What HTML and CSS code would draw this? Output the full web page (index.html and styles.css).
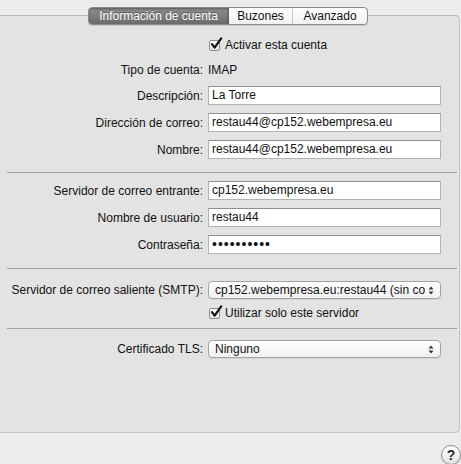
FILE: index.html
```html
<!DOCTYPE html>
<html lang="es">
<head>
<meta charset="utf-8">
<title>Información de cuenta</title>
<link rel="stylesheet" href="styles.css">
</head>
<body>
<div class="window">
  <div class="tabs">
    <div class="tab tab-active tab-info">Información de cuenta</div>
    <div class="tab tab-buzones">Buzones</div>
    <div class="tab tab-avanzado">Avanzado</div>
  </div>
  <div class="panel">
    <div class="row row-check row-first">
      <span class="label"></span>
      <div class="check">
        <span class="box"><svg class="tick" viewBox="0 0 14 14" width="14" height="14"><path d="M3 7.2 L5.6 10.6 L12.2 1.4" fill="none" stroke="#111" stroke-width="2.2" stroke-linecap="round" stroke-linejoin="round"/></svg></span>
        <span class="check-text">Activar esta cuenta</span>
      </div>
    </div>
    <div class="row row-static">
      <span class="label">Tipo de cuenta:</span>
      <span class="value">IMAP</span>
    </div>
    <div class="row row-field">
      <span class="label">Descripción:</span>
      <div class="field">La Torre</div>
    </div>
    <div class="row row-field">
      <span class="label">Dirección de correo:</span>
      <div class="field">restau44@cp152.webempresa.eu</div>
    </div>
    <div class="row row-field">
      <span class="label">Nombre:</span>
      <div class="field">restau44@cp152.webempresa.eu</div>
    </div>
    <div class="sep sep-1"></div>
    <div class="row row-field">
      <span class="label">Servidor de correo entrante:</span>
      <div class="field">cp152.webempresa.eu</div>
    </div>
    <div class="row row-field">
      <span class="label">Nombre de usuario:</span>
      <div class="field">restau44</div>
    </div>
    <div class="row row-field">
      <span class="label">Contraseña:</span>
      <div class="field"><span class="dots">••••••••••</span></div>
    </div>
    <div class="sep sep-2"></div>
    <div class="row row-popup row-smtp">
      <span class="label">Servidor de correo saliente (SMTP):</span>
      <div class="popup">
        <span class="popup-text">cp152.webempresa.eu:restau44 (sin co</span>
        <svg class="arrows" viewBox="0 0 6 9" width="6" height="9"><path d="M3 0.5 L5.5 3.5 L0.5 3.5 Z M3 8.5 L5.5 5.5 L0.5 5.5 Z" fill="#333"/></svg>
      </div>
    </div>
    <div class="row row-check2">
      <span class="label"></span>
      <div class="check">
        <span class="box"><svg class="tick" viewBox="0 0 14 14" width="14" height="14"><path d="M3 7.2 L5.6 10.6 L12.2 1.4" fill="none" stroke="#111" stroke-width="2.2" stroke-linecap="round" stroke-linejoin="round"/></svg></span>
        <span class="check-text">Utilizar solo este servidor</span>
      </div>
    </div>
    <div class="sep sep-3"></div>
    <div class="row row-popup row-tls">
      <span class="label">Certificado TLS:</span>
      <div class="popup">
        <span class="popup-text">Ninguno</span>
        <svg class="arrows" viewBox="0 0 6 9" width="6" height="9"><path d="M3 0.5 L5.5 3.5 L0.5 3.5 Z M3 8.5 L5.5 5.5 L0.5 5.5 Z" fill="#333"/></svg>
      </div>
    </div>
  </div>
  <div class="footer">
    <div class="help">?</div>
  </div>
</div>
</body>
</html>
```

FILE: styles.css
```css
html, body {
  margin: 0;
  padding: 0;
}
body {
  background: #ececec;
  font-family: "Liberation Sans", Arial, sans-serif;
  font-size: 12px;
  color: #111;
  width: 461px;
  height: 464px;
  overflow: hidden;
}
.window {
  display: flex;
  flex-direction: column;
}
.tabs {
  position: relative;
  z-index: 1;
  display: flex;
  margin: 7px 0 -10px 88px;
  width: 280px;
  height: 18px;
  box-sizing: border-box;
  border: 1px solid #8a8a8a;
  border-radius: 4px;
  overflow: hidden;
  background: linear-gradient(#ffffff, #f1f1f1);
  box-shadow: 0 1px 1px rgba(0,0,0,0.12);
}
.tab {
  display: flex;
  align-items: center;
  justify-content: center;
  height: 100%;
  color: #111;
  box-sizing: border-box;
}
.tab-info { width: 140px; }
.tab-buzones { width: 64px; border-right: 1px solid #c9c9c9; }
.tab-avanzado { flex: 1; }
.tab-active {
  background: linear-gradient(#8c8c8c, #6c6c6c);
  color: #fff;
  text-shadow: 0 -1px 0 rgba(0,0,0,0.35);
  box-shadow: inset 0 1px 2px rgba(0,0,0,0.35);
  border-right: 1px solid #5e5e5e;
}
.panel {
  width: 460px;
  height: 418px;
  box-sizing: border-box;
  background: #e3e3e3;
  border: 1px solid #c4c4c4;
  border-left: none;
  border-top-color: #b9b9b9;
  border-radius: 0 5px 5px 0;
  padding-top: 17px;
  display: flex;
  flex-direction: column;
}
.row {
  display: grid;
  grid-template-columns: 203px 233px;
  column-gap: 5px;
  align-items: center;
}
.label {
  text-align: right;
  white-space: nowrap;
}
.row-check { height: 24px; }
.row-static { height: 25px; }
.row-field { height: 27px; }
.row-popup { height: 26px; }
.row-check2 { height: 20px; }
.field {
  height: 19px;
  box-sizing: border-box;
  background: #fff;
  border: 1px solid #b3b3b3;
  border-top-color: #8f8f8f;
  padding: 0 3px;
  line-height: 17px;
  white-space: nowrap;
  overflow: hidden;
}
.dots {
  font-size: 14px;
  letter-spacing: 1px;
  line-height: 17px;
}
.check {
  display: flex;
  align-items: center;
  padding-left: 1px;
}
.box {
  position: relative;
  width: 11px;
  height: 11px;
  box-sizing: border-box;
  border: 1px solid #8c8c8c;
  border-radius: 2px;
  background: linear-gradient(#ffffff, #e4e4e4);
  margin-right: 5px;
  flex: none;
}
.tick {
  position: absolute;
  left: -1px;
  top: -4px;
}
.sep {
  height: 1px;
  background: #a6a6a6;
  margin-left: 7px;
  margin-right: 2px;
}
.sep-1 { margin-top: 9px; margin-bottom: 4px; }
.sep-2 { margin-top: 10px; margin-bottom: 8px; }
.sep-3 { margin-top: 5px; margin-bottom: 7px; }
.popup {
  height: 18px;
  box-sizing: border-box;
  border: 1px solid #a3a3a3;
  border-radius: 4px;
  background: linear-gradient(#ffffff, #f0f0f0);
  box-shadow: 0 1px 0 rgba(0,0,0,0.06);
  display: flex;
  align-items: center;
  padding: 0 6px 0 6px;
}
.popup-text {
  flex: 1;
  white-space: nowrap;
}
.arrows {
  flex: none;
  margin-left: 3px;
}
.footer {
  display: flex;
  justify-content: flex-end;
  padding-top: 12px;
}
.help {
  width: 20px;
  height: 20px;
  box-sizing: border-box;
  border: 1px solid #8d8d8d;
  border-radius: 50%;
  background: linear-gradient(#ffffff, #e2e2e2);
  box-shadow: 0 1px 1px rgba(0,0,0,0.15);
  display: flex;
  align-items: center;
  justify-content: center;
  font-weight: bold;
  font-size: 14px;
  color: #2a2a2a;
}
```
